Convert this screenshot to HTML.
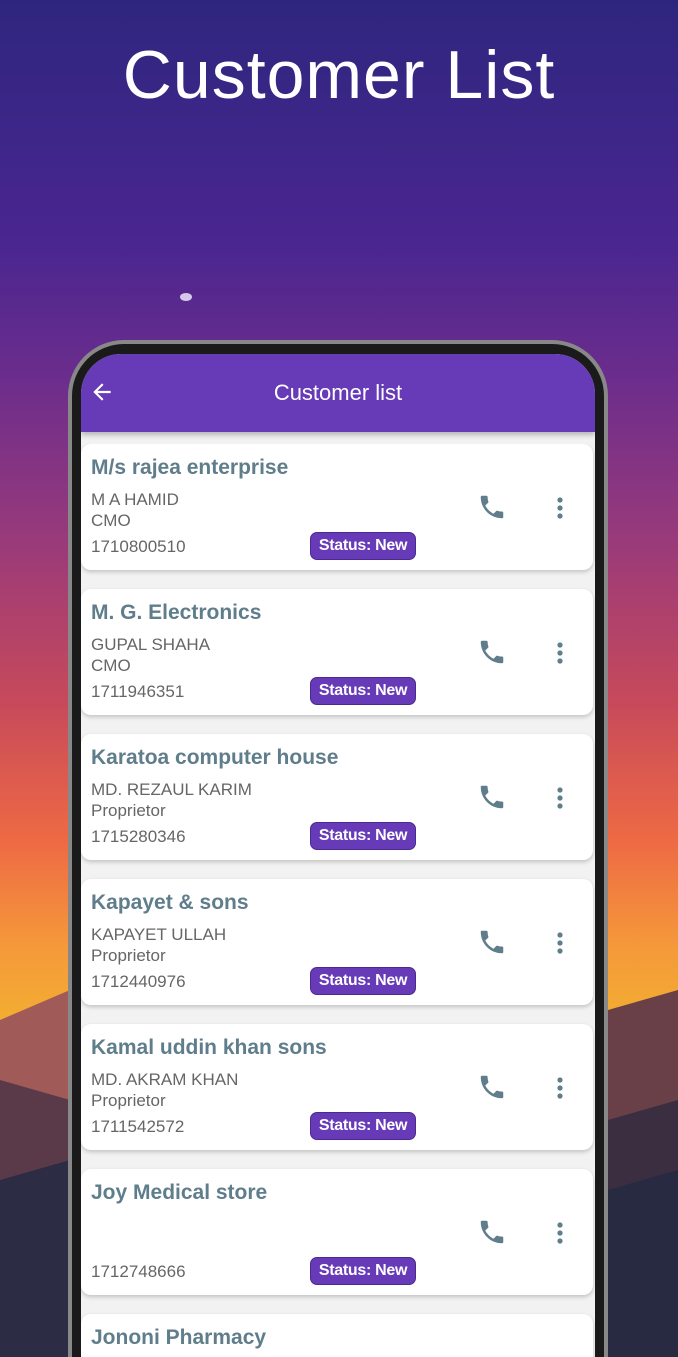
<!DOCTYPE html>
<html style="width:678px;height:1357px;overflow:hidden"><head><meta charset="utf-8"><style>
*{margin:0;padding:0;box-sizing:border-box}
body{width:678px;height:1357px;overflow:hidden;position:relative;font-family:"Liberation Sans",sans-serif;
background:linear-gradient(180deg,#2e267e 0%,#4a2690 18%,#6c2d8c 28%,#9a3a7a 40%,#c84a5a 52%,#ee6a44 62%,#f59a3a 70%,#f2b030 76%,#e8a030 100%)}
.h1{position:absolute;top:36px;left:0;width:678px;text-align:center;color:#fff;font-size:68px;font-weight:normal;letter-spacing:1px}
.dot{position:absolute;left:180px;top:293px;width:12px;height:8px;border-radius:50%;background:#d8c8e8}
.phone{position:absolute;left:68px;top:340px;width:540px;height:1017px;border-radius:56px 56px 0 0;background:#1a1a1a;border:4px solid #888;border-bottom:none}
.screen{position:absolute;left:81px;top:354px;width:514px;height:1003px;border-radius:40px 40px 0 0;background:#f2f2f2;overflow:hidden}
.bar{height:78px;background:#673ab7;color:#fff;font-size:22px;text-align:center;padding-top:26px;position:relative;box-shadow:0 3px 5px rgba(0,0,0,.25)}
.bar svg{position:absolute;left:8px;top:25px}
.wrap{position:absolute;left:81px;top:444px;width:514px;height:913px;overflow:hidden}
.card{position:absolute;left:0;width:512px;height:126px;background:#fff;border-radius:10px;box-shadow:0 2px 4px rgba(0,0,0,.2)}
.t{position:absolute;left:10px;top:12px;font-size:21px;color:#5f7d8a;font-weight:bold}
.l{position:absolute;left:10px;font-size:17px;color:#666}
.st{position:absolute;left:229px;top:88px;width:106px;height:28px;border-radius:7px;background:#673ab7;border:1px solid #4a2a90;color:#fff;font-size:16px;font-weight:bold;text-align:center;line-height:26px;letter-spacing:-.3px}
.ph{position:absolute;left:396px;top:48px}
.mo{position:absolute;left:475px;top:52px}
</style></head><body>
<div class="h1">Customer List</div>
<div class="dot"></div>
<svg style="position:absolute;left:0;top:950px" width="678" height="407"><polygon points="0,70 70,40 70,407 0,407" fill="#a05a58"/><polygon points="0,130 70,150 70,407 0,407" fill="#5a3a48"/><polygon points="0,230 70,210 70,407 0,407" fill="#2c2c44"/><polygon points="608,60 678,40 678,407 608,407" fill="#6a4048"/><polygon points="608,170 678,150 678,407 608,407" fill="#3a2e40"/><polygon points="608,240 678,220 678,407 608,407" fill="#272a40"/></svg>
<div class="phone"></div>
<div class="screen">
<div class="bar"><svg width="26" height="26" viewBox="0 0 24 24"><path d="M20 11H7.8l5.6-5.6L12 4l-8 8 8 8 1.4-1.4L7.8 13H20z" fill="#fff"/></svg>Customer list</div>
</div>
<div class="wrap">
<div class="card" style="top:0"><div class="t">M/s rajea enterprise</div><div class="l" style="top:46px">M A HAMID</div><div class="l" style="top:67px">CMO</div><div class="l" style="top:93px">1710800510</div><div class="st">Status: New</div><svg class="ph" width="30" height="30" viewBox="0 0 24 24"><path d="M6.6 10.8c1.4 2.8 3.8 5.1 6.6 6.6l2.2-2.2c.3-.3.7-.4 1-.2 1.1.4 2.3.6 3.6.6.6 0 1 .4 1 1V20c0 .6-.4 1-1 1C10.6 21 3 13.4 3 4c0-.6.4-1 1-1h3.5c.6 0 1 .4 1 1 0 1.3.2 2.5.6 3.6.1.3 0 .7-.2 1z" fill="#5f7d8a"/></svg><svg class="mo" width="8" height="24"><circle cx="4" cy="4" r="2.6" fill="#5f7d8a"/><circle cx="4" cy="12" r="2.6" fill="#5f7d8a"/><circle cx="4" cy="20" r="2.6" fill="#5f7d8a"/></svg></div>
<div class="card" style="top:145px"><div class="t">M. G. Electronics</div><div class="l" style="top:46px">GUPAL SHAHA</div><div class="l" style="top:67px">CMO</div><div class="l" style="top:93px">1711946351</div><div class="st">Status: New</div><svg class="ph" width="30" height="30" viewBox="0 0 24 24"><path d="M6.6 10.8c1.4 2.8 3.8 5.1 6.6 6.6l2.2-2.2c.3-.3.7-.4 1-.2 1.1.4 2.3.6 3.6.6.6 0 1 .4 1 1V20c0 .6-.4 1-1 1C10.6 21 3 13.4 3 4c0-.6.4-1 1-1h3.5c.6 0 1 .4 1 1 0 1.3.2 2.5.6 3.6.1.3 0 .7-.2 1z" fill="#5f7d8a"/></svg><svg class="mo" width="8" height="24"><circle cx="4" cy="4" r="2.6" fill="#5f7d8a"/><circle cx="4" cy="12" r="2.6" fill="#5f7d8a"/><circle cx="4" cy="20" r="2.6" fill="#5f7d8a"/></svg></div>
<div class="card" style="top:290px"><div class="t">Karatoa computer house</div><div class="l" style="top:46px">MD. REZAUL KARIM</div><div class="l" style="top:67px">Proprietor</div><div class="l" style="top:93px">1715280346</div><div class="st">Status: New</div><svg class="ph" width="30" height="30" viewBox="0 0 24 24"><path d="M6.6 10.8c1.4 2.8 3.8 5.1 6.6 6.6l2.2-2.2c.3-.3.7-.4 1-.2 1.1.4 2.3.6 3.6.6.6 0 1 .4 1 1V20c0 .6-.4 1-1 1C10.6 21 3 13.4 3 4c0-.6.4-1 1-1h3.5c.6 0 1 .4 1 1 0 1.3.2 2.5.6 3.6.1.3 0 .7-.2 1z" fill="#5f7d8a"/></svg><svg class="mo" width="8" height="24"><circle cx="4" cy="4" r="2.6" fill="#5f7d8a"/><circle cx="4" cy="12" r="2.6" fill="#5f7d8a"/><circle cx="4" cy="20" r="2.6" fill="#5f7d8a"/></svg></div>
<div class="card" style="top:435px"><div class="t">Kapayet &amp; sons</div><div class="l" style="top:46px">KAPAYET ULLAH</div><div class="l" style="top:67px">Proprietor</div><div class="l" style="top:93px">1712440976</div><div class="st">Status: New</div><svg class="ph" width="30" height="30" viewBox="0 0 24 24"><path d="M6.6 10.8c1.4 2.8 3.8 5.1 6.6 6.6l2.2-2.2c.3-.3.7-.4 1-.2 1.1.4 2.3.6 3.6.6.6 0 1 .4 1 1V20c0 .6-.4 1-1 1C10.6 21 3 13.4 3 4c0-.6.4-1 1-1h3.5c.6 0 1 .4 1 1 0 1.3.2 2.5.6 3.6.1.3 0 .7-.2 1z" fill="#5f7d8a"/></svg><svg class="mo" width="8" height="24"><circle cx="4" cy="4" r="2.6" fill="#5f7d8a"/><circle cx="4" cy="12" r="2.6" fill="#5f7d8a"/><circle cx="4" cy="20" r="2.6" fill="#5f7d8a"/></svg></div>
<div class="card" style="top:580px"><div class="t">Kamal uddin khan sons</div><div class="l" style="top:46px">MD. AKRAM KHAN</div><div class="l" style="top:67px">Proprietor</div><div class="l" style="top:93px">1711542572</div><div class="st">Status: New</div><svg class="ph" width="30" height="30" viewBox="0 0 24 24"><path d="M6.6 10.8c1.4 2.8 3.8 5.1 6.6 6.6l2.2-2.2c.3-.3.7-.4 1-.2 1.1.4 2.3.6 3.6.6.6 0 1 .4 1 1V20c0 .6-.4 1-1 1C10.6 21 3 13.4 3 4c0-.6.4-1 1-1h3.5c.6 0 1 .4 1 1 0 1.3.2 2.5.6 3.6.1.3 0 .7-.2 1z" fill="#5f7d8a"/></svg><svg class="mo" width="8" height="24"><circle cx="4" cy="4" r="2.6" fill="#5f7d8a"/><circle cx="4" cy="12" r="2.6" fill="#5f7d8a"/><circle cx="4" cy="20" r="2.6" fill="#5f7d8a"/></svg></div>
<div class="card" style="top:725px"><div class="t">Joy Medical store</div><div class="l" style="top:93px">1712748666</div><div class="st">Status: New</div><svg class="ph" width="30" height="30" viewBox="0 0 24 24"><path d="M6.6 10.8c1.4 2.8 3.8 5.1 6.6 6.6l2.2-2.2c.3-.3.7-.4 1-.2 1.1.4 2.3.6 3.6.6.6 0 1 .4 1 1V20c0 .6-.4 1-1 1C10.6 21 3 13.4 3 4c0-.6.4-1 1-1h3.5c.6 0 1 .4 1 1 0 1.3.2 2.5.6 3.6.1.3 0 .7-.2 1z" fill="#5f7d8a"/></svg><svg class="mo" width="8" height="24"><circle cx="4" cy="4" r="2.6" fill="#5f7d8a"/><circle cx="4" cy="12" r="2.6" fill="#5f7d8a"/><circle cx="4" cy="20" r="2.6" fill="#5f7d8a"/></svg></div>
<div class="card" style="top:870px"><div class="t">Jononi Pharmacy</div></div>
</div>
</body></html>
